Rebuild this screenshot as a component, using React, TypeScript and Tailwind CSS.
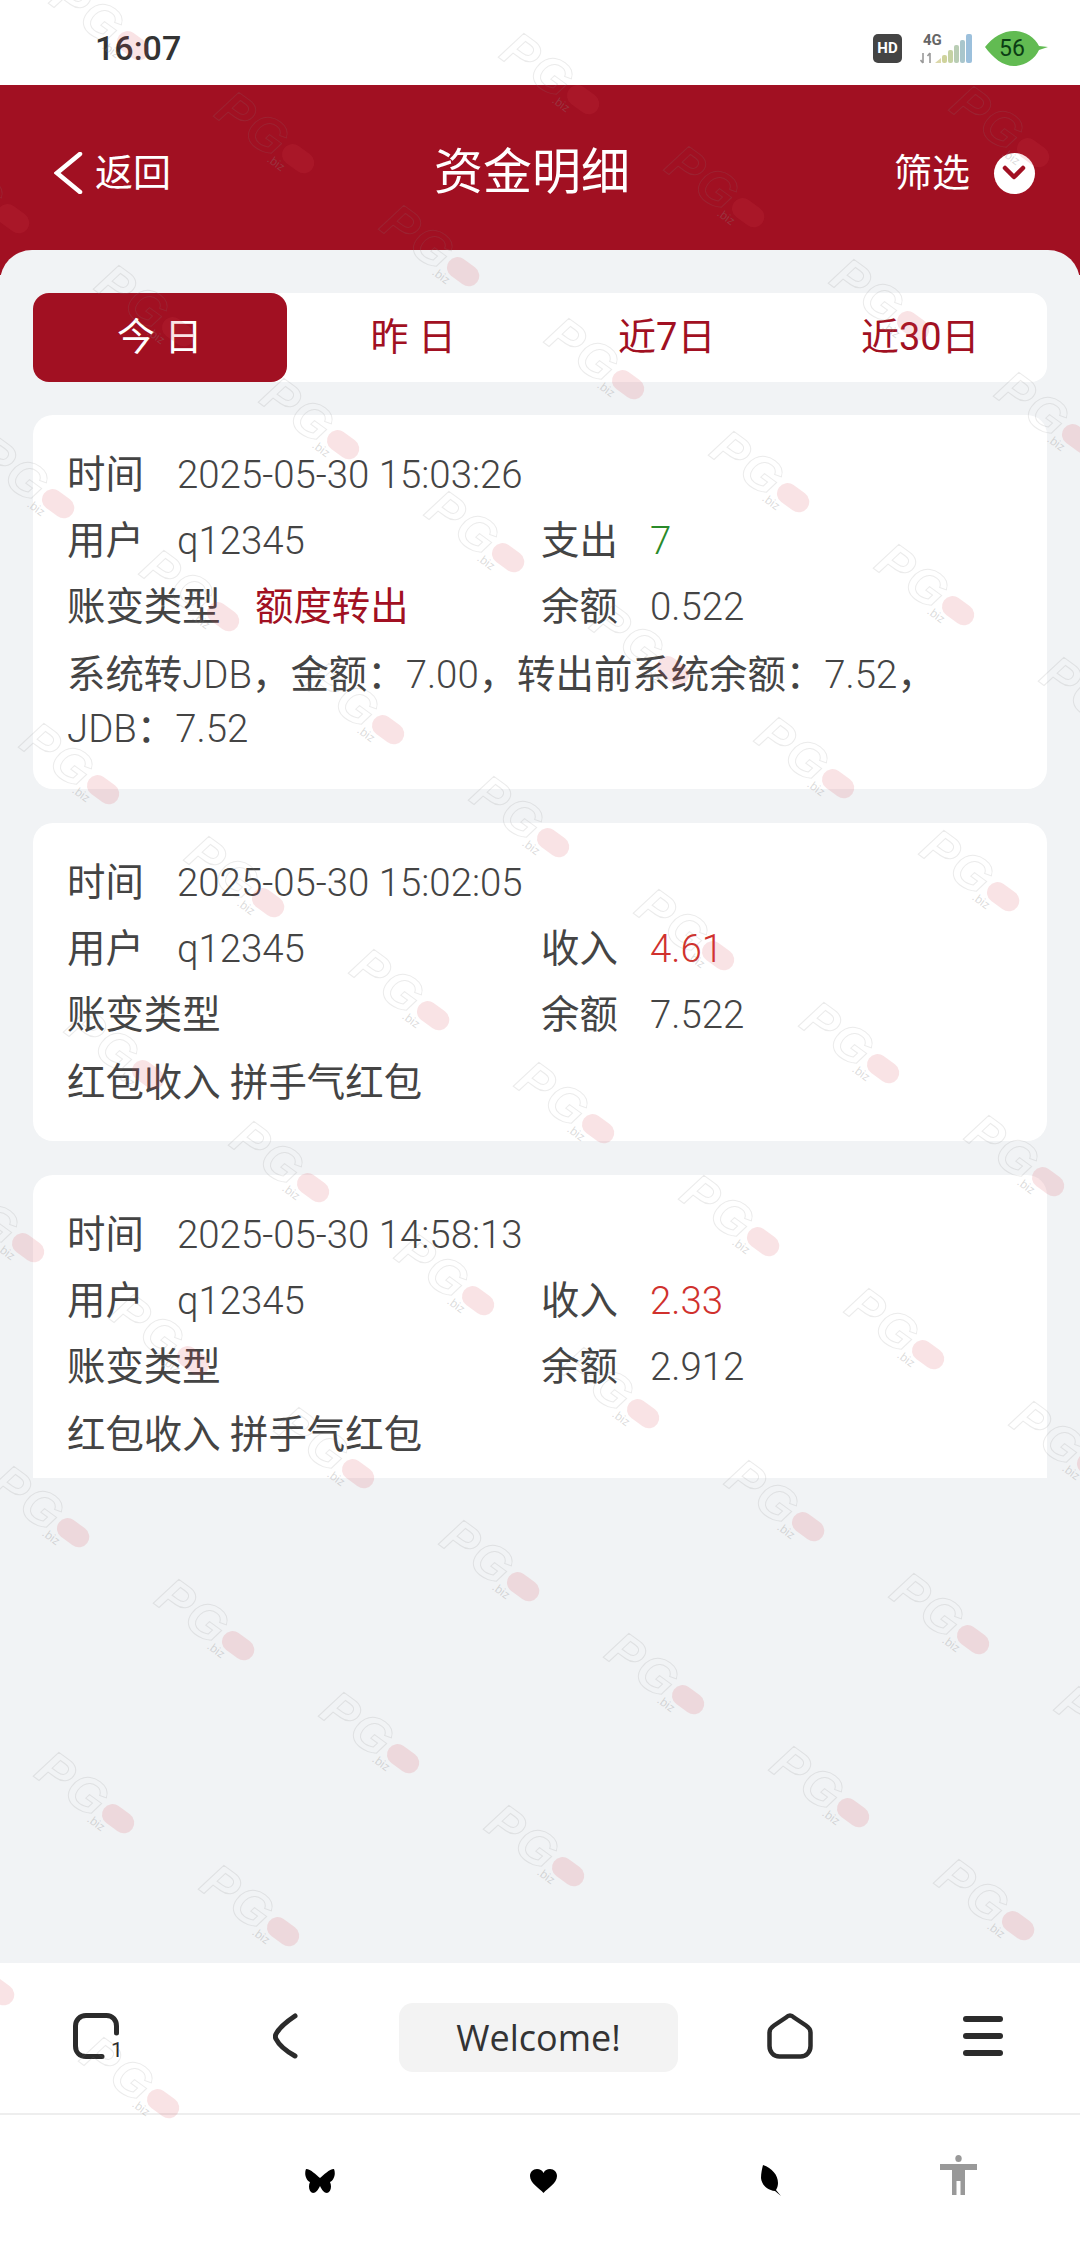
const FONT = "font-['Roboto','Noto_Sans_CJK_SC',sans-serif]";

/* watermark lattice, measured from the screenshot */
const marks: { x: number; y: number }[] = [];
for (let n = -12; n <= 12; n++) {
  for (let m = -12; m <= 12; m++) {
    const x = 73 + 165 * n + 120 * m;
    const y = 1532 + 113 * n - 172.5 * m;
    if (x < -60 || x > 1140 || y < 0 || y > 2110) continue;
    // the status bar and browser toolbar only show the marks on the far left
    if ((y < 85 || y > 1950) && x > 200) continue;
    marks.push({ x, y });
  }
}

const Watermark = ({ x, y }: { x: number; y: number }) => (
  <div
    className="absolute h-[60px] w-[110px] origin-[90px_30px] rotate-[36deg]"
    style={{ left: x - 90, top: y - 30 }}
  >
    <span className="absolute -left-[4px] top-[1px] font-['Liberation_Sans',sans-serif] text-[50px] leading-[56px] font-bold italic tracking-[2px] text-transparent [-webkit-text-stroke:1px_rgba(130,130,130,0.16)]">
      PG
    </span>
    <span className="absolute left-[73px] top-[20px] h-[21px] w-[35px] rounded-full bg-[#d8404f]/15" />
    <span className="absolute left-[66px] top-[40px] font-['Liberation_Sans',sans-serif] text-[12px] leading-[14px] text-[#888]/30">
      .biz
    </span>
  </div>
);

const WatermarkLayer = () => (
  <div className="pointer-events-none absolute inset-0 overflow-hidden">
    {marks.map((m, i) => (
      <Watermark key={i} x={m.x} y={m.y} />
    ))}
  </div>
);

/* status bar icons */
const SignalIcon = () => (
  <svg width="53" height="32" viewBox="0 0 53 32">
    <text x="3" y="12" fontSize="15" fontWeight="700" fill="#666" fontFamily="Roboto">
      4G
    </text>
    <path d="M3 20v10M0.5 27l2.5 3M10 30V20M7.5 23l2.5-3" stroke="#999" strokeWidth="1.6" fill="none" />
    <path d="M15 30l6-5v5z" fill="#dcd8aa" />
    <rect x="22" y="22" width="5" height="8" rx="2" fill="#cfd39c" />
    <rect x="28" y="17" width="5" height="13" rx="2" fill="#c5d2a4" />
    <rect x="34" y="12" width="5" height="18" rx="2" fill="#b9cdb4" />
    <rect x="40" y="7" width="5" height="23" rx="2" fill="#a9c6cc" />
    <rect x="46" y="1" width="6" height="29" rx="2" fill="#9cc0dc" />
  </svg>
);

const BatteryLeaf = () => (
  <div className="relative flex h-[35px] w-[63px] items-center justify-center">
    <svg className="absolute inset-0" width="63" height="35" viewBox="0 0 63 35">
      <path
        d="M0 16C8 6 18 0 29 0c10 0 21 6 25 15l9 1-9 3c-4 9-14 16-25 16C18 35 8 27 0 16z"
        fill="#62bb52"
      />
    </svg>
    <span className={`relative -ml-[9px] text-[23px] leading-none text-[#0b3d14] ${FONT}`}>56</span>
  </div>
);

const StatusBar = () => (
  <div className="flex h-[85px] items-center justify-between bg-white pl-[95px] pr-[32px] pt-[12px]">
    <span className={`text-[34px] font-medium text-[#333] ${FONT}`}>16:07</span>
    <div className="flex items-center">
      <div className="flex h-[29px] w-[29px] items-center justify-center rounded-[5px] bg-[#444] font-['Roboto',sans-serif] text-[15px] font-bold text-white">
        HD
      </div>
      <div className="ml-[18px]">
        <SignalIcon />
      </div>
      <div className="ml-[12px]">
        <BatteryLeaf />
      </div>
    </div>
  </div>
);

const Header = () => (
  <div className={`flex h-[190px] items-start justify-between bg-[#a11022] pl-[54px] pr-[45px] pt-[61px] text-white ${FONT}`}>
    <div className="flex w-[180px] items-center gap-[12px]">
      <svg width="29" height="42" viewBox="0 0 29 42" fill="none" stroke="#fff" strokeWidth="4.5" strokeLinecap="round">
        <path d="M26 2L3 21l23 19" />
      </svg>
      <span className="text-[38px] leading-[54px]">返回</span>
    </div>
    <span className="-mt-[2px] text-[49px] leading-[58px]">资金明细</span>
    <div className="flex w-[205px] items-center justify-end gap-[24px]">
      <span className="text-[38px] leading-[54px]">筛选</span>
      <span className="flex h-[41px] w-[41px] items-center justify-center rounded-full bg-white">
        <svg width="24" height="16" viewBox="0 0 24 16" fill="none" stroke="#a11022" strokeWidth="4.5" strokeLinecap="round" strokeLinejoin="round">
          <path d="M3 3l9 9 9-9" />
        </svg>
      </span>
    </div>
  </div>
);

const tabs = ["今 日", "昨 日", "近7日", "近30日"];

const Tabs = () => (
  <div className="grid h-[89px] grid-cols-4 rounded-[16px] bg-white text-[38px] text-[#a11022]">
    {tabs.map((t, i) => (
      <div
        key={t}
        className={
          i === 0
            ? "flex items-center justify-center rounded-[16px] bg-[#a11022] text-white"
            : "flex items-center justify-center"
        }
      >
        {t}
      </div>
    ))}
  </div>
);

type Entry = {
  time: string;
  kind: string;
  amount: string;
  amountColor: string;
  typeLabel?: string;
  balance: string;
  note: string[];
};

const entries: Entry[] = [
  {
    time: "2025-05-30 15:03:26",
    kind: "支出",
    amount: "7",
    amountColor: "text-[#2a8a2a]",
    typeLabel: "额度转出",
    balance: "0.522",
    note: ["系统转JDB，金额：7.00，转出前系统余额：7.52，", "JDB：7.52"],
  },
  {
    time: "2025-05-30 15:02:05",
    kind: "收入",
    amount: "4.61",
    amountColor: "text-[#d0312d]",
    balance: "7.522",
    note: ["红包收入 拼手气红包"],
  },
  {
    time: "2025-05-30 14:58:13",
    kind: "收入",
    amount: "2.33",
    amountColor: "text-[#d0312d]",
    balance: "2.912",
    note: ["红包收入 拼手气红包"],
  },
];

const Row = ({ children }: { children: React.ReactNode }) => (
  <div className="flex h-[66px] items-center">{children}</div>
);

/* latin runs are Roboto Light in the note, the CJK stays regular */
const NoteLine = ({ text }: { text: string }) => (
  <span>
    {text.split(/([A-Za-z0-9.]+)/).map((part, i) => (
      <span key={i} className={i % 2 === 1 ? "font-light" : ""}>
        {part}
      </span>
    ))}
  </span>
);

const Card = ({ entry, last }: { entry: Entry; last: boolean }) => (
  <div
    className={`bg-white px-[34px] pt-[27px] text-[38.4px] text-[#444] ${
      last ? "h-[303px] rounded-t-[20px]" : "rounded-[20px] pb-[27px]"
    }`}
  >
    <Row>
      <span className="w-[110px]">时间</span>
      <span className="font-light">{entry.time}</span>
    </Row>
    <Row>
      <div className="flex w-[474px]">
        <span className="w-[110px]">用户</span>
        <span className="font-light">q12345</span>
      </div>
      <span className="w-[109px]">{entry.kind}</span>
      <span className={`font-light ${entry.amountColor}`}>{entry.amount}</span>
    </Row>
    <Row>
      <div className="flex w-[474px]">
        <span className="w-[188px]">账变类型</span>
        {entry.typeLabel && <span className="text-[#a11022]">{entry.typeLabel}</span>}
      </div>
      <span className="w-[109px]">余额</span>
      <span className="font-light">{entry.balance}</span>
    </Row>
    {entry.note.map((line, i) => (
      <div
        key={line}
        className={i === 0 ? "flex h-[66px] items-center pt-[3px]" : "mb-[10px] flex h-[46px] items-center"}
      >
        <NoteLine text={line} />
      </div>
    ))}
  </div>
);

/* browser toolbar icons */
const TabsIcon = () => (
  <div className="relative h-[46px] w-[46px]">
    <svg width="46" height="46" viewBox="0 0 46 46" fill="none" stroke="#2b2b2b" strokeWidth="5" strokeLinecap="round">
      <path d="M43.5 20V13c0-6-4-10.500-10-10.500H13C7 2.500 2.500 7 2.500 13v20c0 6 4 10.500 10.500 10.500h16" />
    </svg>
    <span className={`absolute left-[38px] top-[25px] text-[21px] leading-[24px] text-[#2b2b2b] ${FONT}`}>1</span>
  </div>
);

const BackIcon = () => (
  <svg width="25" height="46" viewBox="0 0 25 46" fill="none" stroke="#2b2b2b" strokeWidth="5" strokeLinecap="round" strokeLinejoin="round">
    <path d="M22 3C13 9 6 15 3 21c-1 2-1 3 0 5 3 6 10 12 19 17" />
  </svg>
);

const HomeIcon = () => (
  <svg width="46" height="46" viewBox="0 0 46 46" fill="none" stroke="#2b2b2b" strokeWidth="4.500" strokeLinejoin="round">
    <path d="M23 2.500c2 0 3 1 4 2l12 8c3 2 4.500 4 4.500 7V33c0 6-4 10.500-10 10.500H12.500c-6 0-10-4.500-10-10.500V19.500c0-3 1.500-5 4.500-7l12-8c1-1 2-2 4-2z" />
  </svg>
);

const MenuIcon = () => (
  <div className="flex h-[40px] w-[40px] flex-col justify-between">
    <span className="h-[6px] rounded-full bg-[#2b2b2b]" />
    <span className="h-[6px] rounded-full bg-[#2b2b2b]" />
    <span className="h-[6px] rounded-full bg-[#2b2b2b]" />
  </div>
);

const Toolbar = () => (
  <div className="flex h-[150px] items-start bg-white pl-[73px] pt-[50px]">
    <TabsIcon />
    <div className="ml-[154px]">
      <BackIcon />
    </div>
    <div className="ml-[101px] -mt-[10px] flex h-[69px] w-[279px] items-center justify-center rounded-[14px] bg-[#f3f3f3] font-['Open_Sans',sans-serif] text-[36px] text-[#333]">
      Welcome!
    </div>
    <div className="ml-[89px]">
      <HomeIcon />
    </div>
    <div className="ml-[150px] mt-[3px]">
      <MenuIcon />
    </div>
  </div>
);

/* system shortcut row */
const ShortcutRow = () => (
  <div className="flex h-[131px] items-start border-t-2 border-[#eeeeee] bg-white pl-[305px]">
    <svg className="mt-[53px]" width="30" height="26" viewBox="0 0 30 26" fill="#000">
      <path d="M1 1c5 0 10 6 14 9 4-3 9-9 14-9 2 5 0 11-4 13 2 4 1 10-3 11-3 0-5-3-7-7-2 4-4 7-7 7-4-1-5-7-3-11C1 12-1 6 1 1z" />
    </svg>
    <svg className="ml-[195px] mt-[54px]" width="27" height="24" viewBox="0 0 27 24" fill="#000">
      <path d="M13.500 24C9 19 0 14 0 7c0-4 3-7 7-7 3 0 5 1 6.500 4C15 1 17 0 20 0c4 0 7 3 7 7 0 7-9 12-13.500 17z" />
    </svg>
    <svg className="ml-[204px] mt-[50px]" width="22" height="31" viewBox="0 0 22 31" fill="#000">
      <path d="M2 0c9 3 15 10 15 18 0 3-1 5-2 7l5 6-6-5C7 25 1 21 0 13 0 8 1 4 2 0z" />
    </svg>
    <svg className="ml-[157px] mt-[40px]" width="37" height="40" viewBox="0 0 37 40" fill="#999">
      <ellipse cx="18.500" cy="3.500" rx="3.200" ry="3.500" />
      <path d="M0 9h37v6H25v25h-4.500V26h-4v14H12V15H0z" />
    </svg>
  </div>
);

export default function App() {
  return (
    <div className={`relative flex h-[2244px] w-[1080px] flex-col overflow-hidden bg-[#f1f3f5] ${FONT}`}>
      <StatusBar />
      <Header />
      {/* sheet over the red header */}
      <div className="-mt-[25px] flex flex-1 flex-col gap-[33px] rounded-t-[32px] bg-[#f1f3f5] px-[33px] pt-[43px]">
        <Tabs />
        <div className="flex flex-col gap-[34px]">
          {entries.map((e, i) => (
            <Card key={e.time} entry={e} last={i === entries.length - 1} />
          ))}
        </div>
      </div>
      <Toolbar />
      <ShortcutRow />
      <WatermarkLayer />
    </div>
  );
}
